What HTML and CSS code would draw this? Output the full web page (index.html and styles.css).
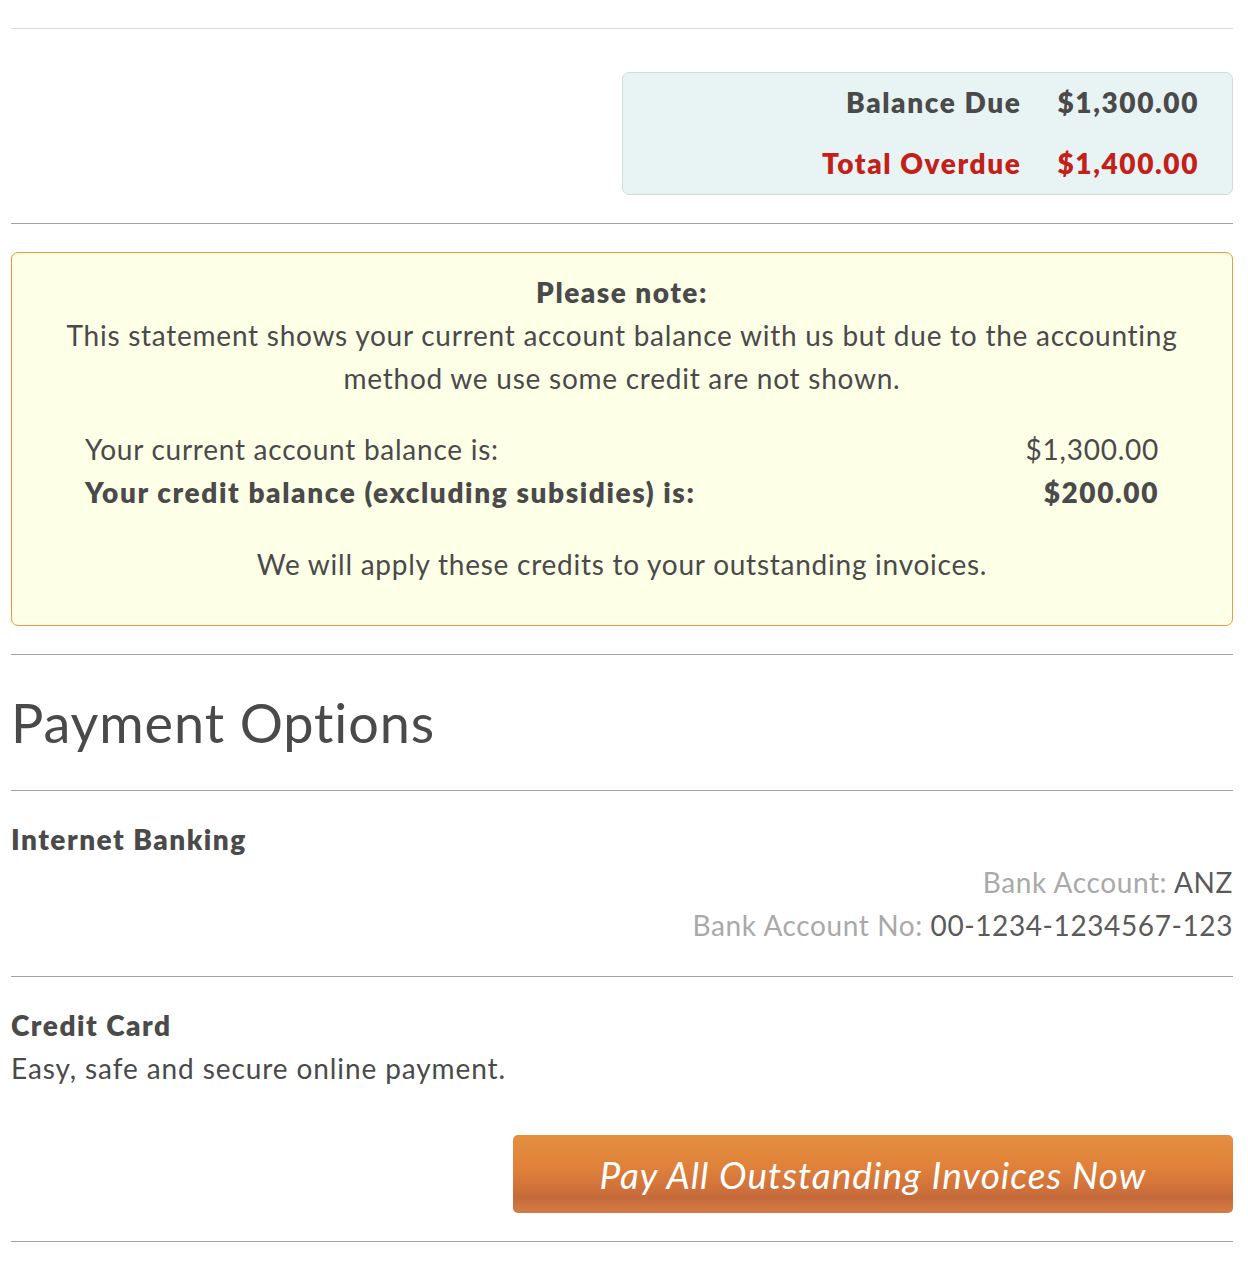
FILE: index.html
```html
<!DOCTYPE html>
<html lang="en">
<head>
<meta charset="utf-8">
<title>Statement</title>
<link rel="stylesheet" href="styles.css">
</head>
<body>
<div class="page">
  <hr class="rule rule-light">
  <div class="summary-wrap">
    <div class="summary">
      <div class="summary-row">
        <span class="summary-label">Balance Due</span>
        <span class="summary-value">$1,300.00</span>
      </div>
      <div class="summary-row overdue">
        <span class="summary-label">Total Overdue</span>
        <span class="summary-value">$1,400.00</span>
      </div>
    </div>
  </div>
  <hr class="rule">
  <div class="note">
    <p class="note-title">Please note:</p>
    <p class="note-text">This statement shows your current account balance with us but due to the accounting method we use some credit are not shown.</p>
    <div class="note-rows">
      <div class="note-row"><span>Your current account balance is:</span><span>$1,300.00</span></div>
      <div class="note-row strong"><span>Your credit balance (excluding subsidies) is:</span><span>$200.00</span></div>
    </div>
    <p class="note-foot">We will apply these credits to your outstanding invoices.</p>
  </div>
  <hr class="rule">
  <h1 class="heading">Payment Options</h1>
  <hr class="rule">
  <section class="option">
    <h2 class="option-title">Internet Banking</h2>
    <div class="bank">
      <div><span class="muted">Bank Account:</span> ANZ</div>
      <div><span class="muted">Bank Account No:</span> 00-1234-1234567-123</div>
    </div>
  </section>
  <hr class="rule">
  <section class="option">
    <h2 class="option-title">Credit Card</h2>
    <p class="option-text">Easy, safe and secure online payment.</p>
    <div class="btn-wrap">
      <a class="pay-btn" href="#">Pay All Outstanding Invoices Now</a>
    </div>
  </section>
  <hr class="rule">
</div>
</body>
</html>
```

FILE: styles.css
```css
html, body {
  margin: 0;
  padding: 0;
  background: #fff;
}
body {
  font-family: Lato, "Open Sans", sans-serif;
  color: #4a4a4a;
  font-size: 28px;
  line-height: 43px;
  letter-spacing: 0.75px;
}
.page {
  margin: 0 15px 0 11px;
  padding-top: 28px;
}
.rule {
  border: 0;
  border-top: 1px solid #a3a3a3;
  margin: 0;
  height: 0;
}
.rule-light {
  border-top-color: #dcdcdc;
}
.summary-wrap {
  display: flex;
  justify-content: flex-end;
  padding: 43px 0 28px;
}
.summary {
  width: 611px;
  height: 123px;
  box-sizing: border-box;
  background: #e8f4f4;
  border: 1px solid #d4d9d9;
  border-radius: 7px;
  padding: 8px 33px 0 0;
  display: flex;
  flex-direction: column;
  gap: 18px;
}
.summary-row {
  display: flex;
  justify-content: flex-end;
  font-weight: 800;
  letter-spacing: 1.6px;
  line-height: 43px;
}
.summary-label {
  margin-right: 36px;
}
.overdue {
  color: #c3201a;
}
.note {
  margin: 28px 0;
  background: #fdffe6;
  border: 1px solid #f19a3a;
  border-radius: 7px;
  padding: 18px 40px 39px;
  text-align: center;
}
.note p {
  margin: 0;
}
.note-title {
  font-weight: 800;
  letter-spacing: 1.5px;
}
.note-rows {
  margin: 28px 33px 29px;
  text-align: left;
}
.note-row {
  display: flex;
  justify-content: space-between;
}
.note-row.strong {
  font-weight: 800;
  letter-spacing: 1.6px;
}
.heading {
  font-weight: 400;
  font-size: 54px;
  line-height: 64px;
  letter-spacing: 0.9px;
  margin: 36px 0 35px;
  color: #4a4a4a;
}
.option {
  padding: 27px 0 29px;
}
.option-title {
  font-size: 28px;
  font-weight: 800;
  letter-spacing: 1.5px;
  line-height: 43px;
  margin: 0;
}
.bank {
  text-align: right;
  color: #5a5a5a;
  letter-spacing: 0.6px;
}
.muted {
  color: #a9a9a9;
}
.option-text {
  margin: 0;
  letter-spacing: 0.9px;
}
.btn-wrap {
  display: flex;
  justify-content: flex-end;
  margin-top: 45px;
  margin-bottom: -1px;
}
.pay-btn {
  width: 720px;
  height: 78px;
  display: flex;
  align-items: center;
  justify-content: center;
  border-radius: 5px;
  color: #fff;
  text-decoration: none;
  font-style: italic;
  font-size: 37px;
  letter-spacing: 1px;
  background: linear-gradient(to bottom, #e38f3f 0%, #e0823a 40%, #d2733a 65%, #c46a3b 80%, #d57c45 100%);
}
```
